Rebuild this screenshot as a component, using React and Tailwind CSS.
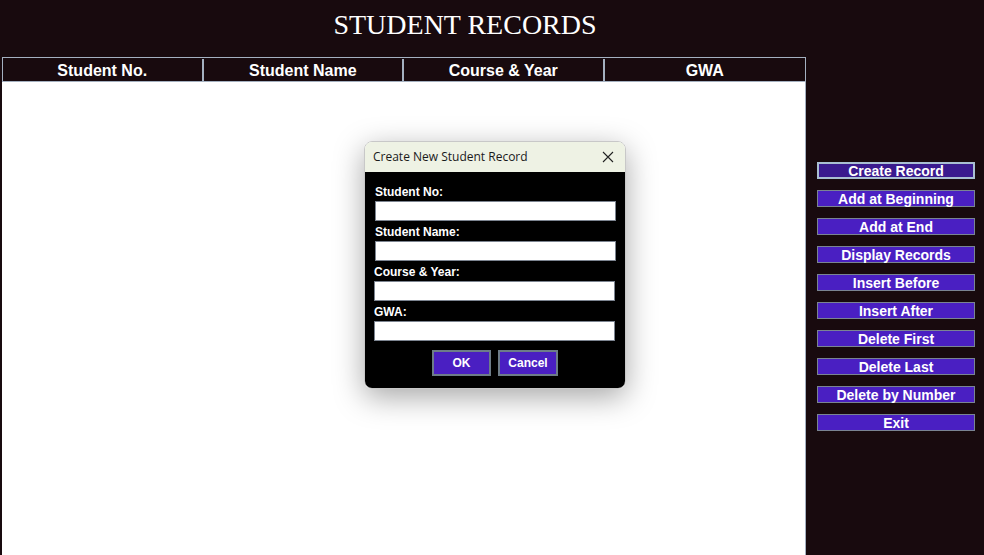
import { useState } from 'react'

const columns = ['Student No.', 'Student Name', 'Course & Year', 'GWA']

const actions = [
  'Create Record',
  'Add at Beginning',
  'Add at End',
  'Display Records',
  'Insert Before',
  'Insert After',
  'Delete First',
  'Delete Last',
  'Delete by Number',
  'Exit',
]

const fields = [
  { label: 'Student No:', pad: 'pl-[10px]' },
  { label: 'Student Name:', pad: 'pl-[10px]' },
  { label: 'Course & Year:', pad: 'pl-[9px]' },
  { label: 'GWA:', pad: 'pl-[9px]' },
]

function RecordDialog() {
  const [values, setValues] = useState(['', '', '', ''])

  return (
    <div className="w-[262px] overflow-hidden rounded-lg border border-[#c8c8c8] shadow-[0_8px_30px_rgba(0,0,0,0.35)]">
      <div className="flex h-[30px] items-center justify-between bg-[#eef2e4] pl-[8px] pr-[9px]">
        <span className="text-[12px] text-[#1a1a1a] [font-family:'Open_Sans','Noto_Sans',sans-serif]">
          Create New Student Record
        </span>
        <svg width="12" height="12" viewBox="0 0 12 12" className="mr-[2px]">
          <path d="M1 1L11 11M11 1L1 11" stroke="#222" strokeWidth="1.1" />
        </svg>
      </div>
      <div className="bg-black pb-[12px] pr-[10px] pt-[12px]">
        {fields.map((f, i) => (
          <div key={f.label} className={`${f.pad} mb-[3px]`}>
            <div className="h-[17px] text-[12px] font-bold leading-[17px] text-white [font-family:'Liberation_Sans',Arial,sans-serif]">
              {f.label}
            </div>
            <input
              value={values[i]}
              onChange={(e) => {
                const next = [...values]
                next[i] = e.target.value
                setValues(next)
              }}
              className="block h-[20px] w-[241px] border border-[#7c8490] bg-white outline-none"
            />
          </div>
        ))}
        <div className="mt-[9px] flex justify-center gap-[7px] pl-[10px]">
          <button className="h-[26px] w-[59px] border-2 border-[#6d7c88] bg-[#4a1fc2] text-[12px] font-bold text-white [font-family:'Liberation_Sans',Arial,sans-serif]">
            OK
          </button>
          <button className="h-[26px] w-[60px] border-2 border-[#6d7c88] bg-[#4a1fc2] text-[12px] font-bold text-white [font-family:'Liberation_Sans',Arial,sans-serif]">
            Cancel
          </button>
        </div>
      </div>
    </div>
  )
}

export default function App() {
  return (
    <div className="flex h-[555px] w-[984px] flex-col overflow-hidden bg-[#180a0e] pl-[2px]">
      <div className="flex h-[57px] w-[926px] items-center justify-center pb-[8px]">
        <h1 className="text-[28px] text-white [font-family:'Liberation_Serif','DejaVu_Serif',serif]">
          STUDENT RECORDS
        </h1>
      </div>
      <div className="flex flex-1">
        <div className="relative flex w-[804px] flex-col">
          <div className="grid h-[25px] grid-cols-4 border border-[#a4b0c0] bg-[#180a0e] pt-[1px]">
            {columns.map((c, i) => (
              <div
                key={c}
                className={`flex items-center justify-center text-[16px] font-bold text-white [font-family:'Liberation_Sans',Arial,sans-serif] ${
                  i < 3 ? 'border-r-2 border-[#a4b0c0]' : ''
                }`}
              >
                {c}
              </div>
            ))}
          </div>
          <div className="flex-1 border-r border-[#a4b0c0] bg-white" />
          <div className="absolute left-[362px] top-[84px]">
            <RecordDialog />
          </div>
        </div>
        <div className="flex flex-1 flex-col gap-[11px] pl-[11px] pt-[105px]">
          {actions.map((a, i) => (
            <button
              key={a}
              className={`h-[17px] w-[158px] text-[14px] font-bold leading-none text-white [font-family:'Liberation_Sans',Arial,sans-serif] ${
                i === 0
                  ? 'border-2 border-[#a9bfd2] bg-[#3a1a8e] outline outline-1 -outline-offset-3 outline-[#3a1a8e]'
                  : 'border border-[#7a8492] bg-[#4a1fc2]'
              }`}
            >
              {a}
            </button>
          ))}
        </div>
      </div>
    </div>
  )
}
